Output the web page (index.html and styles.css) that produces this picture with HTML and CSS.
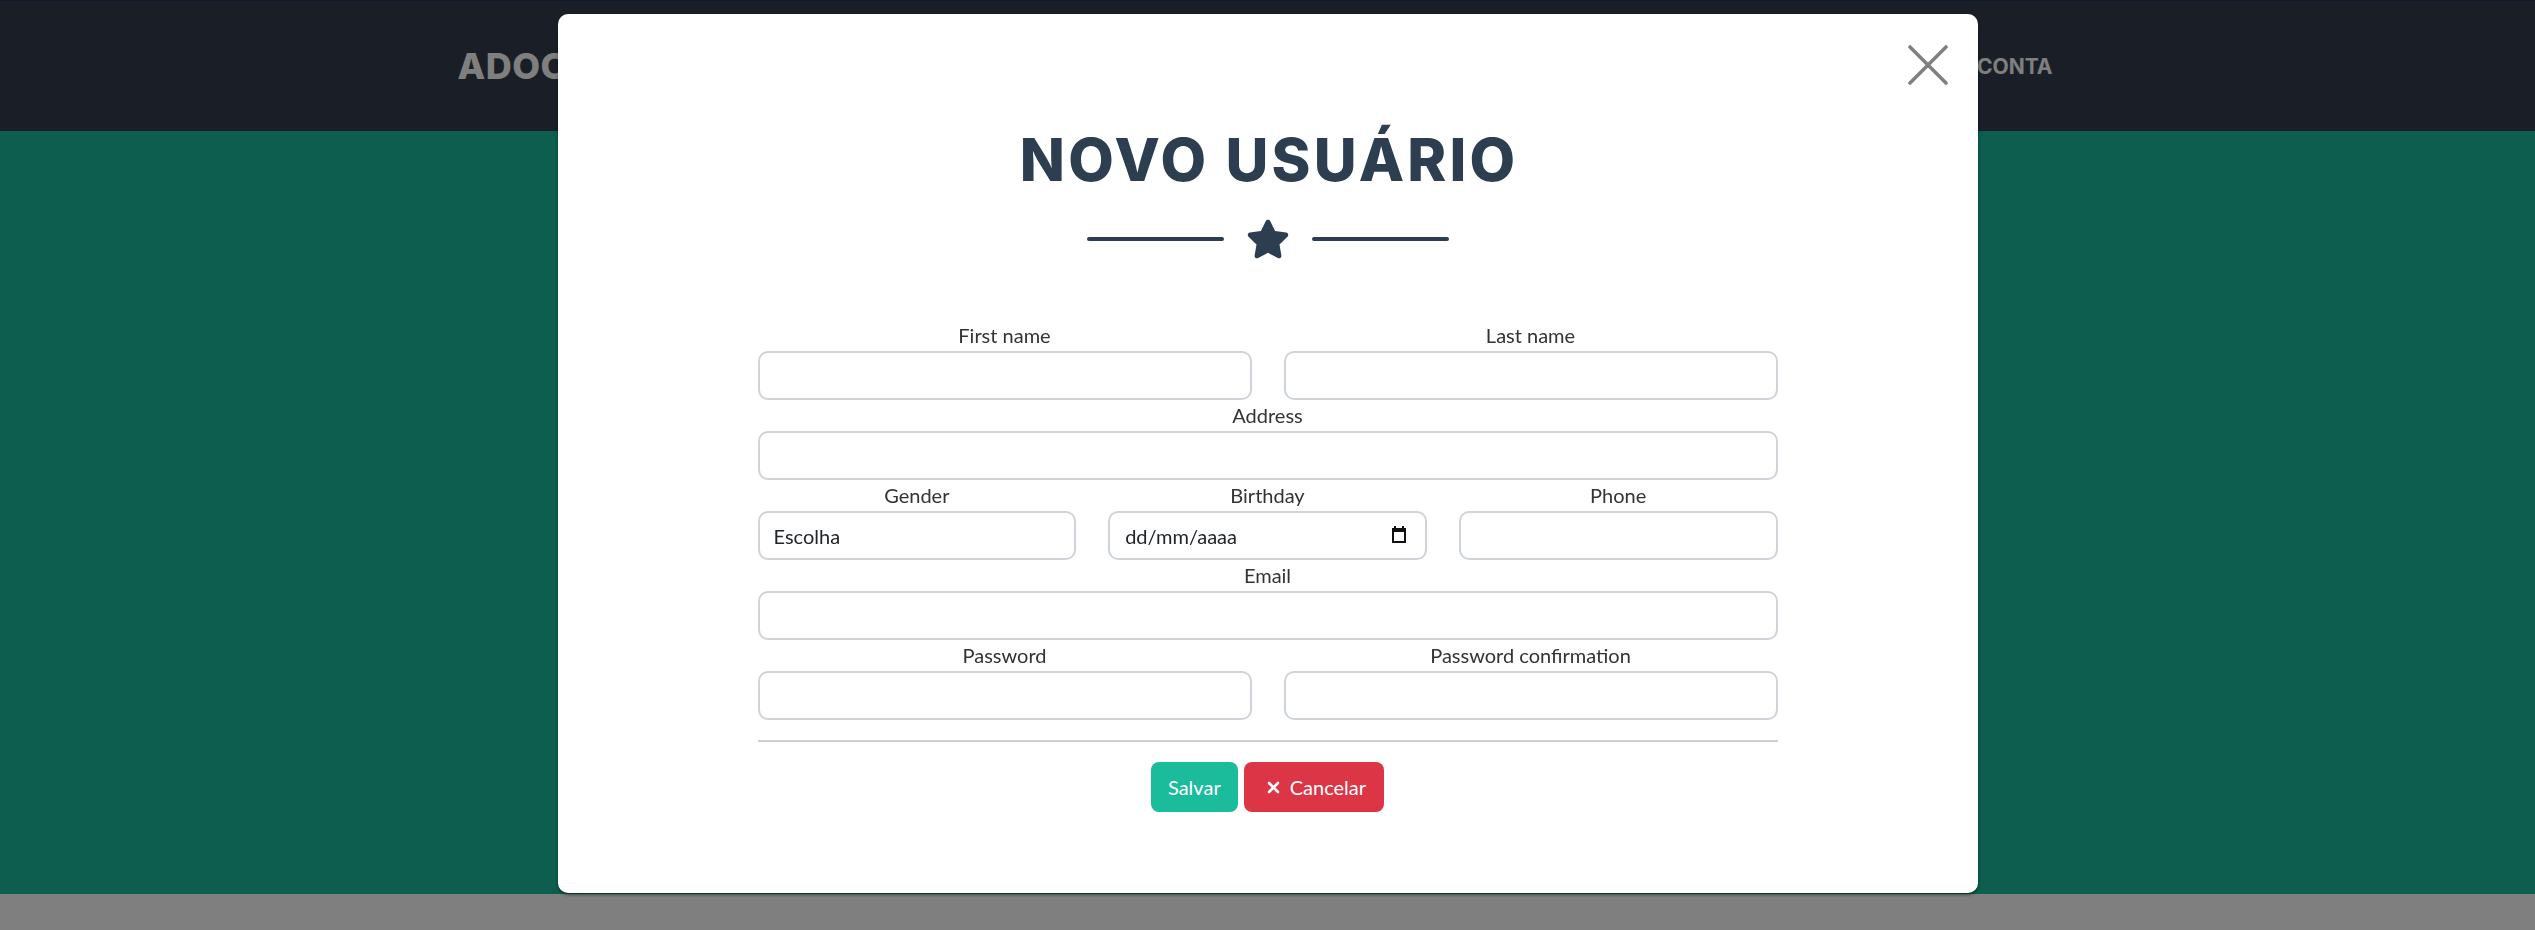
FILE: index.html
```html
<!DOCTYPE html>
<html lang="pt">
<head>
<meta charset="utf-8">
<title>Novo usuário</title>
<link rel="stylesheet" href="styles.css">
</head>
<body>
<header class="navbar">
  <div class="nav-container">
    <a class="brand" href="#">ADOCAO</a>
    <ul class="nav-links">
      <li><a href="#">INÍCIO</a></li>
      <li><a href="#">CONTA</a></li>
    </ul>
  </div>
</header>
<section class="hero"></section>
<footer class="footer"></footer>

<div class="backdrop"></div>

<div class="modal-wrap">
  <div class="modal">
    <button class="close" type="button" aria-label="Fechar">
      <svg viewBox="0 0 40 40" width="40" height="40"><path d="M2 2 L38 38 M38 2 L2 38" stroke="#808080" stroke-width="3.6" stroke-linecap="round" fill="none"/></svg>
    </button>
    <h2 class="title">NOVO USUÁRIO</h2>
    <div class="divider">
      <span class="line"></span>
      <svg class="star" viewBox="10 0 556 512"><path d="M259.3 17.8L194 150.2 47.9 171.5c-26.2 3.8-36.7 36.1-17.7 54.6l105.7 103-25 145.5c-4.5 26.3 23.2 46 46.4 33.7L288 439.6l130.7 68.7c23.2 12.2 50.9-7.4 46.4-33.7l-25-145.5 105.7-103c19-18.5 8.5-50.8-17.7-54.6L382 150.2 316.7 17.8c-11.7-23.6-45.6-23.9-57.4 0z"/></svg>
      <span class="line"></span>
    </div>
    <form class="form">
      <div class="row">
        <div class="field"><label for="fn">First name</label><input id="fn" class="control" type="text"></div>
        <div class="field"><label for="ln">Last name</label><input id="ln" class="control" type="text"></div>
      </div>
      <div class="row">
        <div class="field"><label for="ad">Address</label><input id="ad" class="control" type="text"></div>
      </div>
      <div class="row">
        <div class="field"><label for="ge">Gender</label>
          <select id="ge" class="control select"><option>Escolha</option><option>Feminino</option><option>Masculino</option></select>
        </div>
        <div class="field"><label for="bd">Birthday</label>
          <div class="control date">
            <input id="bd" class="date-text" type="text" placeholder="dd/mm/aaaa">
            <svg class="cal" viewBox="0 0 16 17" width="16" height="17"><rect x="3" y="0" width="2" height="3" fill="#111"/><rect x="11" y="0" width="2" height="3" fill="#111"/><rect x="1" y="2" width="14" height="4" fill="#111"/><rect x="2" y="3" width="12" height="13" fill="none" stroke="#111" stroke-width="2"/></svg>
          </div>
        </div>
        <div class="field"><label for="ph">Phone</label><input id="ph" class="control" type="tel"></div>
      </div>
      <div class="row">
        <div class="field"><label for="em">Email</label><input id="em" class="control" type="email"></div>
      </div>
      <div class="row">
        <div class="field"><label for="pw">Password</label><input id="pw" class="control" type="password"></div>
        <div class="field"><label for="pc">Password confirmation</label><input id="pc" class="control" type="password"></div>
      </div>
      <hr class="rule">
      <div class="actions">
        <button class="btn save" type="submit">Salvar</button>
        <button class="btn cancel" type="button">
          <svg class="x-icon" viewBox="0 0 13 13" width="13" height="13"><path d="M2 2 L11 11 M11 2 L2 11" stroke="#fff" stroke-width="2.6" stroke-linecap="round" fill="none"/></svg>
          Cancelar
        </button>
      </div>
    </form>
  </div>
</div>
</body>
</html>
```
FILE: styles.css
```css
html, body {
  margin: 0;
  padding: 0;
}

body {
  font-family: Lato, "Open Sans", sans-serif;
  background: #ffffff;
  height: 930px;
  overflow: hidden;
}

.navbar {
  background: #343e4f;
  border-top: 1px solid #1a365c;
  height: 130px;
  display: flex;
  align-items: center;
}

.nav-container {
  width: 1620px;
  margin: 0 auto;
  display: flex;
  justify-content: space-between;
  align-items: center;
}

.brand {
  font-family: Inter, "Open Sans", sans-serif;
  font-weight: 800;
  font-size: 36px;
  color: #ffffff;
  text-decoration: none;
  letter-spacing: 0.5px;
}

.nav-links {
  list-style: none;
  display: flex;
  gap: 30px;
  margin: 0;
  padding: 0 25px 0 0;
}

.nav-links a {
  font-family: Inter, "Open Sans", sans-serif;
  font-weight: 700;
  font-size: 21px;
  color: #ffffff;
  text-decoration: none;
}

.hero {
  height: 763px;
  background: #1abc9c;
}

.footer {
  height: 36px;
  background: #ffffff;
}

.backdrop {
  position: fixed;
  inset: 0;
  background: rgba(0, 0, 0, 0.5);
}

.modal-wrap {
  position: fixed;
  inset: 0;
  display: flex;
  justify-content: center;
  align-items: flex-start;
  padding-top: 14px;
}

.modal {
  position: relative;
  width: 1420px;
  box-sizing: border-box;
  background: #ffffff;
  border-radius: 10px;
  padding: 111px 0 81px;
  box-shadow: 0 2px 3px rgba(0, 0, 0, 0.45);
}

.close {
  position: absolute;
  top: 31px;
  right: 30px;
  width: 40px;
  height: 40px;
  border: 0;
  padding: 0;
  background: none;
  cursor: pointer;
}

.close svg {
  display: block;
}

.title {
  margin: 0;
  padding-left: 3.2px;
  font-family: Inter, "Open Sans", sans-serif;
  font-weight: 800;
  font-size: 59px;
  letter-spacing: 3.2px;
  line-height: 70px;
  color: #2c3e50;
  text-align: center;
}

.divider {
  display: flex;
  justify-content: center;
  align-items: center;
  height: 40px;
  margin-top: 24px;
}

.line {
  width: 137px;
  height: 4px;
  border-radius: 4px;
  background: #2c3e50;
}

.star {
  width: 42px;
  height: 40px;
  margin: 0 23px;
  fill: #2c3e50;
}

.form {
  width: 1020px;
  margin: 61px auto 0;
}

.row {
  display: flex;
  gap: 32px;
}

.field {
  flex: 1;
  min-width: 0;
  display: flex;
  flex-direction: column;
}

.field label {
  text-align: center;
  font-size: 20px;
  line-height: 31px;
  color: #333333;
}

.control {
  width: 100%;
  height: 49px;
  box-sizing: border-box;
  border: 2px solid #ced4da;
  border-radius: 10px;
  background: #ffffff;
  padding: 0 14px;
  font-family: Lato, "Open Sans", sans-serif;
  font-size: 20px;
  color: #212529;
  outline: none;
}

.select {
  appearance: none;
  -webkit-appearance: none;
}

.date {
  display: flex;
  align-items: center;
  padding: 0 18px 0 15px;
}

.date-text {
  flex: 1;
  min-width: 0;
  border: 0;
  padding: 0;
  outline: none;
  font-family: Lato, "Open Sans", sans-serif;
  font-size: 20px;
  color: #212529;
  background: transparent;
}

.date-text::placeholder {
  color: #212529;
  opacity: 1;
}

.cal {
  flex: none;
  margin-top: -2px;
}

.rule {
  border: 0;
  border-top: 2px solid #cfcfcf;
  margin: 20px 0;
}

.actions {
  display: flex;
  justify-content: center;
  gap: 6px;
}

.btn {
  height: 50px;
  border: 0;
  border-radius: 8px;
  padding: 0 17px;
  display: inline-flex;
  align-items: center;
  gap: 10px;
  font-family: Lato, "Open Sans", sans-serif;
  font-size: 20px;
  color: #ffffff;
  cursor: pointer;
}

.save {
  background: #1abc9c;
}

.cancel {
  background: #dc3545;
  padding-left: 23px;
  padding-right: 18px;
}

.x-icon {
  flex: none;
}
```
